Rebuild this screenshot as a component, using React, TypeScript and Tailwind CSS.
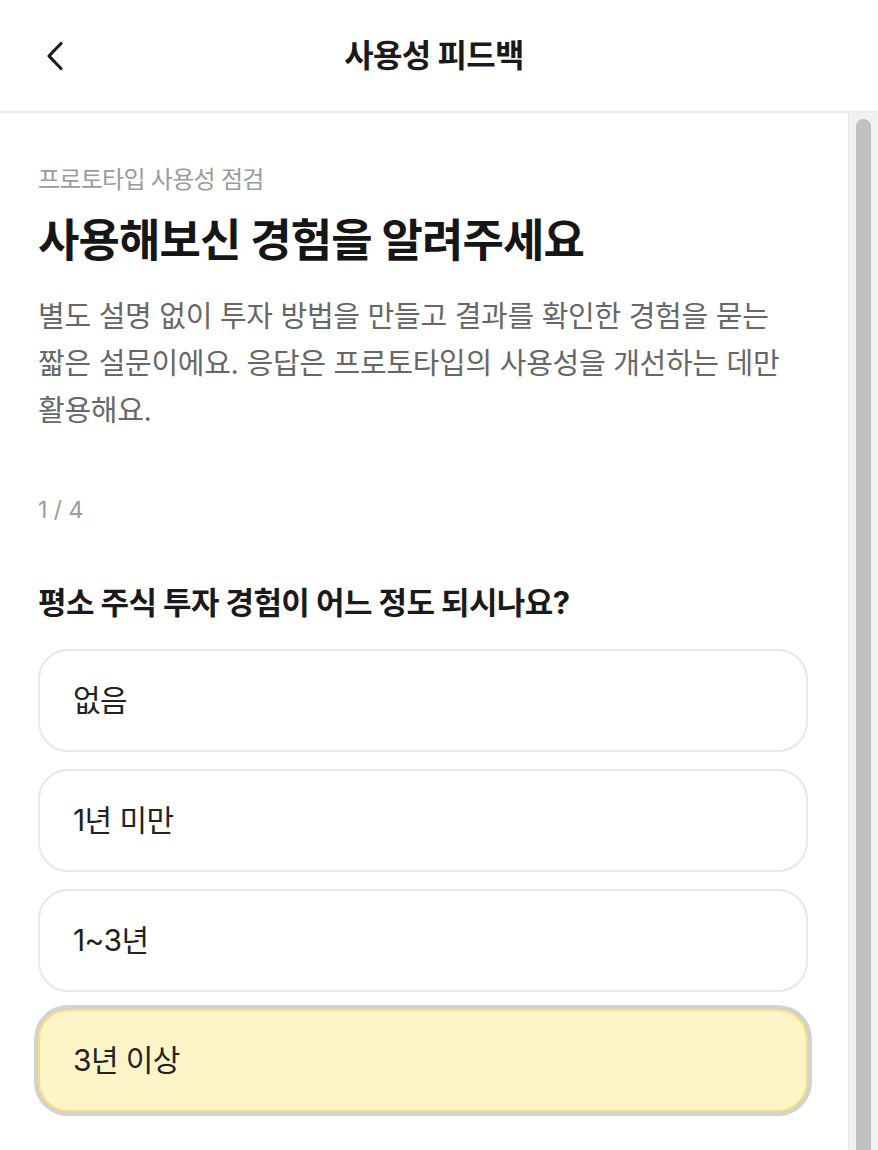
import { useState } from 'react';

const OPTIONS = ['없음', '1년 미만', '1~3년', '3년 이상'];

function BackIcon() {
  return (
    <svg width="18" height="30" viewBox="0 0 18 30" fill="none">
      <path d="M15 2.5 L3 15 L15 27.5" stroke="#1a1a1a" strokeWidth="3.2" strokeLinecap="round" strokeLinejoin="round" />
    </svg>
  );
}

export default function App() {
  const [selected, setSelected] = useState(3);

  return (
    <div
      className="flex h-[1150px] w-[878px] flex-col overflow-hidden bg-white text-[#1a1a1a]"
      style={{ fontFamily: 'Inter, "Noto Sans CJK KR", sans-serif' }}
    >
      {/* header */}
      <header className="flex h-[113px] shrink-0 items-center border-b-2 border-[#ececec] pl-[46px] pr-[10px]">
        <button className="flex h-[40px] w-[24px] items-center">
          <BackIcon />
        </button>
        <h1 className="flex-1 pr-[70px] text-center text-[32px] font-bold tracking-[-0.02em]">사용성 피드백</h1>
      </header>

      <div className="flex min-h-0 flex-1">
        <main className="flex-1 pl-[38px] pr-[40px] pt-[52px]">
          <p className="text-[24px] leading-[30px] tracking-[-0.03em] text-[#9b9b9b]">프로토타입 사용성 점검</p>
          <h2 className="mt-[18px] text-[45px] font-bold leading-[56px] tracking-[-0.02em] text-[#161616]">
            사용해보신 경험을 알려주세요
          </h2>
          <p className="mt-[24px] break-keep text-[29px] leading-[47px] tracking-[-0.01em] text-[#676767]">
            별도 설명 없이 투자 방법을 만들고 결과를 확인한 경험을 묻는 짧은 설문이에요. 응답은 프로토타입의 사용성을
            개선하는 데만 활용해요.
          </p>

          <div className="mt-[61px] text-[23px] leading-[30px] text-[#9b9b9b]">1 / 4</div>

          <h3 className="mt-[58px] text-[31px] font-bold leading-[40px] tracking-[-0.02em] text-[#1a1a1a]">
            평소 주식 투자 경험이 어느 정도 되시나요?
          </h3>

          <div className="mt-[26px] flex flex-col gap-[17px]">
            {OPTIONS.map((label, i) => (
              <button
                key={label}
                onClick={() => setSelected(i)}
                className={
                  i === selected
                    ? 'flex h-[103px] items-center rounded-[30px] border-2 border-[#f6df78] bg-[#fdf4c8] px-[33px] text-left text-[30px] tracking-[-0.02em] text-[#222] ring-[4px] ring-[#d2d2d2]'
                    : 'flex h-[103px] items-center rounded-[30px] border-2 border-[#e8e8e8] bg-white px-[33px] text-left text-[30px] tracking-[-0.02em] text-[#222]'
                }
              >
                {label}
              </button>
            ))}
          </div>
        </main>

        {/* scrollbar */}
        <div className="flex w-[30px] shrink-0 flex-col border-l border-[#e6e6e6] bg-[#f1f1f1] pt-[6px]">
          <div className="mx-auto w-[15px] flex-1 rounded-t-full bg-[#c1c1c1]" />
        </div>
      </div>
    </div>
  );
}
